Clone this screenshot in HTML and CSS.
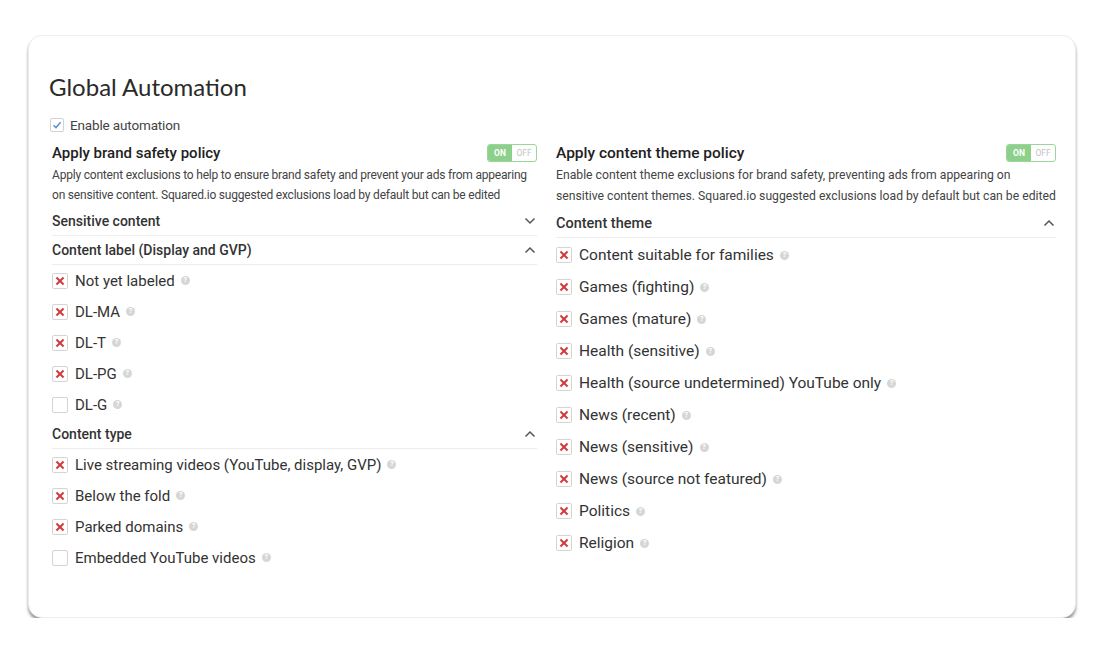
FILE: index.html
```html
<!DOCTYPE html>
<html lang="en">
<head>
    <meta charset="UTF-8">
    <title>Global Automation</title>
    <link rel="stylesheet" href="styles.css">
</head>
<body>
    <div class="card">
        <h1 class="title">Global Automation</h1>
        <label class="enable">
            <span class="tick">
                <svg width="10" height="10" viewBox="0 0 10 10"><path d="M1.5 5.2 L4 7.6 L8.6 2.2" fill="none" stroke="#5d8fd6" stroke-width="1.5"/></svg>
            </span>
            Enable automation
        </label>

        <div class="columns">
            <div class="col">
                <div class="policy-head">
                    <h2>Apply brand safety policy</h2>
                    <div class="toggle"><span class="on">ON</span><span class="off">OFF</span></div>
                </div>
                <p class="desc">Apply content exclusions to help to ensure brand safety and prevent your ads from appearing on sensitive content. Squared.io suggested exclusions load by default but can be edited</p>

                <div class="section">Sensitive content
                    <svg class="chev" width="12" height="8" viewBox="0 0 12 8"><path d="M1.5 1.5 L6 6 L10.5 1.5" fill="none" stroke="#555" stroke-width="1.5"/></svg>
                </div>
                <div class="section">Content label (Display and GVP)
                    <svg class="chev" width="12" height="8" viewBox="0 0 12 8"><path d="M1.5 6.5 L6 2 L10.5 6.5" fill="none" stroke="#555" stroke-width="1.5"/></svg>
                </div>
                <ul class="items">
                    <li><span class="box x"></span>Not yet labeled<span class="help">?</span></li>
                    <li><span class="box x"></span>DL-MA<span class="help">?</span></li>
                    <li><span class="box x"></span>DL-T<span class="help">?</span></li>
                    <li><span class="box x"></span>DL-PG<span class="help">?</span></li>
                    <li><span class="box"></span>DL-G<span class="help">?</span></li>
                </ul>
                <div class="section">Content type
                    <svg class="chev" width="12" height="8" viewBox="0 0 12 8"><path d="M1.5 6.5 L6 2 L10.5 6.5" fill="none" stroke="#555" stroke-width="1.5"/></svg>
                </div>
                <ul class="items">
                    <li><span class="box x"></span>Live streaming videos (YouTube, display, GVP)<span class="help">?</span></li>
                    <li><span class="box x"></span>Below the fold<span class="help">?</span></li>
                    <li><span class="box x"></span>Parked domains<span class="help">?</span></li>
                    <li><span class="box"></span>Embedded YouTube videos<span class="help">?</span></li>
                </ul>
            </div>

            <div class="col right">
                <div class="policy-head">
                    <h2>Apply content theme policy</h2>
                    <div class="toggle"><span class="on">ON</span><span class="off">OFF</span></div>
                </div>
                <p class="desc">Enable content theme exclusions for brand safety, preventing ads from appearing on<br>sensitive content themes. Squared.io suggested exclusions load by default but can be edited</p>

                <div class="section theme">Content theme
                    <svg class="chev" width="12" height="8" viewBox="0 0 12 8"><path d="M1.5 6.5 L6 2 L10.5 6.5" fill="none" stroke="#555" stroke-width="1.5"/></svg>
                </div>
                <ul class="items">
                    <li><span class="box x"></span>Content suitable for families<span class="help">?</span></li>
                    <li><span class="box x"></span>Games (fighting)<span class="help">?</span></li>
                    <li><span class="box x"></span>Games (mature)<span class="help">?</span></li>
                    <li><span class="box x"></span>Health (sensitive)<span class="help">?</span></li>
                    <li><span class="box x"></span>Health (source undetermined) YouTube only<span class="help">?</span></li>
                    <li><span class="box x"></span>News (recent)<span class="help">?</span></li>
                    <li><span class="box x"></span>News (sensitive)<span class="help">?</span></li>
                    <li><span class="box x"></span>News (source not featured)<span class="help">?</span></li>
                    <li><span class="box x"></span>Politics<span class="help">?</span></li>
                    <li><span class="box x"></span>Religion<span class="help">?</span></li>
                </ul>
            </div>
        </div>
    </div>
</body>
</html>
```

FILE: styles.css
```css
body {
    margin: 0;
    background: #fff;
    font-family: Roboto, "Liberation Sans", sans-serif;
    color: #333;
}
.card {
    box-sizing: border-box;
    width: 1048px;
    height: 583px;
    margin: 35px 0 0 28px;
    padding: 36px 19px 0 20px;
    border: 1px solid #ededed;
    border-radius: 14px;
    box-shadow: 0 3px 3px rgba(0, 0, 0, 0.4);
    background: #fff;
}
.title {
    margin: 0;
    font-family: Lato, "Open Sans", sans-serif;
    font-size: 24px;
    font-weight: 400;
    line-height: 30px;
    color: #2a2a2a;
}
.enable {
    display: flex;
    align-items: center;
    gap: 6px;
    height: 20px;
    margin: 13px 0 0 1px;
    font-size: 13.5px;
    letter-spacing: -0.15px;
    color: #444;
}
.tick {
    display: flex;
    align-items: center;
    justify-content: center;
    width: 12px;
    height: 12px;
    border: 1px solid #d2d2d2;
    border-radius: 2px;
}
.columns {
    display: grid;
    grid-template-columns: 485px 1fr;
    gap: 19px;
    margin: 7px 0 0 3px;
}
.policy-head {
    display: flex;
    justify-content: space-between;
    align-items: center;
    height: 22px;
}
.policy-head h2 {
    margin: 0;
    font-size: 15px;
    font-weight: 500;
    color: #222;
}
.toggle {
    display: flex;
    width: 48px;
    height: 16px;
    border: 1px solid #9ad59a;
    border-radius: 3px;
    overflow: hidden;
    font-size: 8.5px;
    line-height: 16px;
    text-align: center;
}
.toggle .on {
    flex: 1;
    background: #8dd08b;
    color: #fff;
    font-weight: 700;
}
.toggle .off {
    flex: 1;
    color: #c4c4c4;
}
.desc {
    margin: 1px 0 2px;
    font-size: 12px;
    letter-spacing: -0.2px;
    line-height: 20px;
    color: #444;
}
.section {
    display: flex;
    justify-content: space-between;
    align-items: center;
    height: 28px;
    border-bottom: 1px solid #ededed;
    font-size: 14px;
    font-weight: 500;
    color: #333;
}
.chev {
    margin-right: 1px;
}
.items {
    margin: 0;
    padding: 0;
    list-style: none;
}
.items li {
    display: flex;
    align-items: center;
    height: 31px;
    font-size: 15px;
    color: #333;
}
.right h2 {
    font-size: 15.5px;
}
.right .desc {
    font-size: 12.2px;
    letter-spacing: 0;
    line-height: 21px;
    white-space: nowrap;
}
.right .section {
    margin-top: 1px;
    font-size: 14.5px;
}
.right .items {
    padding-top: 1px;
}
.right .items li {
    height: 32px;
    font-size: 15.5px;
}
.box {
    box-sizing: border-box;
    width: 16px;
    height: 16px;
    margin-right: 7px;
    border: 1px solid #d4d4d4;
    border-radius: 2px;
    position: relative;
}
.box.x::before,
.box.x::after {
    content: "";
    position: absolute;
    left: 2px;
    top: 6px;
    width: 10px;
    height: 2px;
    background: #d23c3c;
    transform: rotate(45deg);
}
.box.x::after {
    transform: rotate(-45deg);
}
.help {
    display: inline-flex;
    align-items: center;
    justify-content: center;
    width: 9px;
    height: 9px;
    margin-left: 6px;
    border-radius: 50%;
    background: #d6d6d6;
    color: #fff;
    font-size: 7px;
    font-weight: 700;
    line-height: 9px;
}
```
